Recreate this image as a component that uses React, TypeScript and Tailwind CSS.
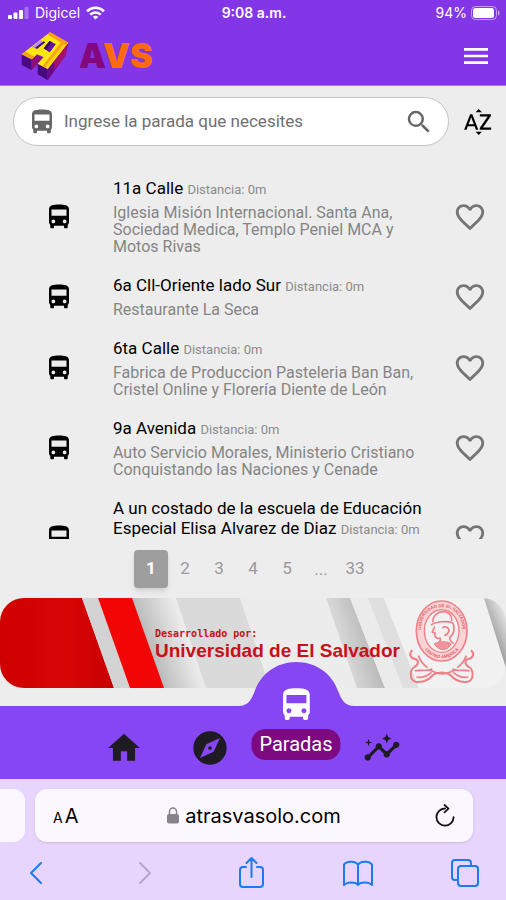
import { useState } from "react";
import type { ReactNode } from "react";
import {
  MdDirectionsBus,
  MdExplore,
  MdFavorite,
  MdFavoriteBorder,
  MdHome,
  MdInsights,
  MdMenu,
  MdSearch,
  MdSortByAlpha,
} from "react-icons/md";

interface Parada {
  id: number;
  nombre: string;
  distancia: string;
  lugares: string;
}

const paradas: Parada[] = [
  {
    id: 1,
    nombre: "11a Calle",
    distancia: "0m",
    lugares:
      "Iglesia Misión Internacional. Santa Ana, Sociedad Medica, Templo Peniel MCA y Motos Rivas",
  },
  {
    id: 2,
    nombre: "6a Cll-Oriente lado Sur",
    distancia: "0m",
    lugares: "Restaurante La Seca",
  },
  {
    id: 3,
    nombre: "6ta Calle",
    distancia: "0m",
    lugares:
      "Fabrica de Produccion Pasteleria Ban Ban, Cristel Online y Florería Diente de León",
  },
  {
    id: 4,
    nombre: "9a Avenida",
    distancia: "0m",
    lugares:
      "Auto Servicio Morales, Ministerio Cristiano Conquistando las Naciones y Cenade",
  },
  {
    id: 5,
    nombre: "A un costado de la escuela de Educación Especial Elisa Alvarez de Diaz",
    distancia: "0m",
    lugares: "",
  },
];

const paginas = ["1", "2", "3", "4", "5", "...", "33"];

function StatusBar() {
  return (
    <div className="grid grid-cols-3 items-center h-[26px] pl-2 pr-1.5 font-['Inter',sans-serif] text-sm text-white">
      <div className="flex items-center gap-1.5">
        <svg width="21" height="12" viewBox="0 0 21 12" fill="#fff">
          <rect x="0" y="8" width="4" height="4" rx="1" />
          <rect x="5.5" y="5.5" width="4" height="6.5" rx="1" />
          <rect x="11" y="3" width="4" height="9" rx="1" />
          <rect x="16.5" y="0" width="4" height="12" rx="1" opacity="0.3" />
        </svg>
        <span>Digicel</span>
        <svg width="19" height="14" viewBox="0 0 19 14" fill="none" stroke="#fff" strokeWidth="2.6">
          <path d="M1 5.2C5.8.6 13.2.6 18 5.2" />
          <path d="M4.2 8.6c3-2.9 7.6-2.9 10.6 0" />
          <path d="M9.5 13.6 6.8 10.8c1.5-1.4 3.9-1.4 5.4 0z" fill="#fff" stroke="none" />
        </svg>
      </div>
      <div className="text-center font-semibold">9:08 a.m.</div>
      <div className="flex items-center justify-end gap-1">
        <span>94%</span>
        <svg width="29" height="14" viewBox="0 0 29 14">
          <rect x="0.5" y="0.5" width="25" height="13" rx="4" fill="none" stroke="#fff" strokeOpacity="0.5" />
          <rect x="2" y="2" width="21" height="10" rx="2.5" fill="#fff" />
          <path d="M27 4.5c2 .8 2 4.2 0 5z" fill="#fff" fillOpacity="0.6" />
        </svg>
      </div>
    </div>
  );
}

function Logo() {
  return (
    <svg width="60" height="58" viewBox="0 0 180 174">
      <path d="M20 82 50 97v33L20 114z" fill="#4a0a86" />
      <path d="M50 97 66 84l18 8-16 20-18 18z" fill="#8c0f80" />
      <path d="M68 110 98 126v34l-30-18z" fill="#47087f" />
      <path d="M98 126 160 47l-8 38-54 75z" fill="#6a0a86" />
      <path d="M116 103 160 47l-8 38-32 42z" fill="#a81070" />
      <path
        fillRule="evenodd"
        d="M20 82 105 16l55 31-62 79-30-16 18-20-20-8-16 15zM86 64l18 12 18-24-18-10z"
        fill="#ffe70f"
      />
      <path d="M20 82 30 74l30 15-10 8zM97 22l8-6 55 31-7 9z" fill="#fb9d17" />
      <path d="M82 118 138 46l14 9-58 69z" fill="#fba51a" />
      <path d="M92 118 146 52l6 3-56 70z" fill="#ffd712" />
      <path d="M86 64 104 42l18 10-18 24z" fill="#64139c" />
      <path d="M86 64 104 42l6 3-16 24z" fill="#34105f" />
      <path d="M50 60 76 40l12 5-26 20z" fill="#bd92ef" />
      <path d="M60 62 86 43l5 3-25 20z" fill="#3a1070" />
    </svg>
  );
}

function Header() {
  return (
    <header className="bg-[#8236e8] border-b border-[#a876f0]">
      <StatusBar />
      <div className="flex items-center justify-between h-[59px] pl-[15px] pr-3.5">
        <div className="flex items-center gap-1">
          <Logo />
          <span className="font-['Inter',sans-serif] text-[34px] leading-8 font-black text-[#ff6a0b]">
            <span className="text-[#85097e]">A</span>VS
          </span>
        </div>
        <button aria-label="Menú" className="text-white">
          <MdMenu size={32} />
        </button>
      </div>
    </header>
  );
}

function SearchBar() {
  const [texto, setTexto] = useState("");

  return (
    <div className="flex items-center gap-[13px] pt-[11px] pl-[13px] pr-3">
      <label className="flex flex-1 min-w-0 items-center gap-[7px] h-[49px] pl-[13px] pr-3.5 rounded-full border border-[#c4c4c4] bg-white text-[#666]">
        <MdDirectionsBus size={30} className="shrink-0" />
        <input
          type="text"
          aria-label="Buscar parada"
          value={texto}
          onChange={(e) => setTexto(e.target.value)}
          placeholder="Ingrese la parada que necesites"
          className="flex-1 min-w-0 bg-transparent text-[17px] outline-none placeholder:text-[#707070]"
        />
        <MdSearch size={30} className="shrink-0" />
      </label>
      <button aria-label="Ordenar" className="text-black">
        <MdSortByAlpha size={32} />
      </button>
    </div>
  );
}

function ParadaItem({ parada }: { parada: Parada }) {
  const [favorita, setFavorita] = useState(false);

  return (
    <li className="flex items-center py-2.5 pl-11 pr-[19px]">
      <MdDirectionsBus size={30} className="shrink-0 text-black" />
      <div className="flex-1 min-w-0 ml-[39px] mr-6">
        <h2 className="text-[17px] leading-5 text-black">
          {parada.nombre}{" "}
          <small className="text-[13px] leading-none text-[#8c8c8c]">
            Distancia: {parada.distancia}
          </small>
        </h2>
        {parada.lugares ? (
          <p className="mt-1.5 text-base leading-[17px] text-[#858585]">
            {parada.lugares}
          </p>
        ) : (
          <div className="h-10" />
        )}
      </div>
      <button
        aria-label="Favorita"
        onClick={() => setFavorita(!favorita)}
        className="shrink-0 text-[#757575]"
      >
        {favorita ? <MdFavorite size={34} /> : <MdFavoriteBorder size={34} />}
      </button>
    </li>
  );
}

function Pagination() {
  const [actual, setActual] = useState("1");

  return (
    <nav className="flex justify-center pt-[11px] text-[17px] text-[#9a9a9a]">
      {paginas.map((p) =>
        p === "..." ? (
          <span key={p} className="w-[34px] leading-[38px] text-center">
            {p}
          </span>
        ) : (
          <button
            key={p}
            onClick={() => setActual(p)}
            className={`w-[34px] h-[38px] rounded-[4px] ${
              actual === p ? "bg-[#9e9e9e] font-bold text-white shadow-md" : ""
            }`}
          >
            {p}
          </button>
        )
      )}
    </nav>
  );
}

function Seal() {
  return (
    <svg width="75" height="92" viewBox="0 0 225 276" className="shrink-0" fill="none" stroke="#ee7f88">
      {/* cintas */}
      <path
        d="M22 160c-12 10-6 24 8 26 14 4 10 18-2 24-14 8-16 40 4 44 24 4 40-6 52-20 14-10 38-10 52 0 12 14 28 24 52 20 20-4 18-36 4-44-12-6-16-20-2-24 14-2 20-16 8-26"
        strokeWidth="6"
      />
      <path
        d="M30 222c16-6 30 4 52-6M194 222c-16-6-30 4-52-6M34 240c18 4 34-4 46-14M190 240c-18 4-34-4-46-14M40 176c6 16 12 26 28 36M184 176c-6 16-12 26-28 36M76 220c24 14 48 14 72 0"
        strokeWidth="5"
      />
      <ellipse cx="110" cy="102" rx="64" ry="77" stroke="#fad3d5" strokeWidth="24" />
      <ellipse cx="110" cy="102" rx="76" ry="90" strokeWidth="5" />
      <ellipse cx="110" cy="102" rx="52" ry="64" strokeWidth="4" />
      {/* busto */}
      <path
        d="M84 76c-4-16 14-34 34-32 16 2 24 14 22 28M78 84c14-10 46-14 66-6M88 88c2 8-8 14-6 18l8 2c-2 10 2 18 16 16 2 8-2 12-10 16M144 78c6 16 4 34-10 42 0 10 6 16 12 20M112 92c10-6 22 0 20 12M118 116c8-2 12-8 14-14"
        strokeWidth="5"
      />
      <path d="M88 140c16-8 38-8 50 0-6 14-16 18-24 18s-20-6-26-18z" fill="#f2949b" strokeWidth="3" />
      <path id="arco-sup" d="M52 130C36 62 72 30 110 30s74 32 58 100" stroke="none" />
      <path id="arco-inf" d="M52 146c26 50 90 50 116 0" stroke="none" />
      <g stroke="none" fill="#e0606b" fontSize="13" fontWeight="bold" fontFamily="Liberation Sans, sans-serif">
        <text textAnchor="middle">
          <textPath href="#arco-sup" startOffset="50%">UNIVERSIDAD DE EL SALVADOR</textPath>
        </text>
        <text textAnchor="middle">
          <textPath href="#arco-inf" startOffset="50%">CENTRO AMERICA</textPath>
        </text>
      </g>
    </svg>
  );
}

function Banner() {
  return (
    <div className="relative flex h-[90px] items-center justify-between mt-2.5 pl-[155px] pr-[26px] overflow-hidden rounded-3xl">
      <svg
        className="absolute inset-0 w-full h-full"
        viewBox="0 0 506 90"
        preserveAspectRatio="none"
      >
        <defs>
          <linearGradient id="rojo">
            <stop offset="0" stopColor="#cf0000" />
            <stop offset="0.6" stopColor="#d80505" />
            <stop offset="1" stopColor="#c80000" />
          </linearGradient>
          <linearGradient id="sombra" gradientUnits="userSpaceOnUse" x1="140" y1="50" x2="185" y2="34">
            <stop offset="0" stopColor="#b0b0b0" />
            <stop offset="1" stopColor="#ececec" />
          </linearGradient>
          <linearGradient id="gris" gradientUnits="userSpaceOnUse" x1="338" y1="50" x2="372" y2="40">
            <stop offset="0" stopColor="#dcdcdc" />
            <stop offset="1" stopColor="#b8b8b8" />
          </linearGradient>
          <linearGradient id="borde" gradientUnits="userSpaceOnUse" x1="488" y1="30" x2="506" y2="22">
            <stop offset="0" stopColor="#9c9c9c" />
            <stop offset="1" stopColor="#dedede" />
          </linearGradient>
        </defs>
        <rect width="506" height="90" fill="#ebebeb" />
        <path d="M130 0h46l30 90h-44z" fill="url(#sombra)" />
        <path d="M176 0h64l30 90h-64z" fill="#dadada" />
        <path d="M240 0h88l30 90H270z" fill="#ececec" />
        <path d="M326 0h24l35 90h-28z" fill="url(#gris)" />
        <path d="M350 0h18l35 90h-18z" fill="#ebebeb" />
        <path d="M368 0h16l35 90h-16z" fill="#dfdfdf" />
        <path d="M384 0h100l22 70v20h-87z" fill="#f1f1f1" />
        <path d="M484 0h22v70z" fill="url(#borde)" />
        <path d="M0 0h82l32 90H0z" fill="url(#rojo)" />
        <path d="M82 0h16l32 90h-16z" fill="#d3d3d3" />
        <path d="M98 0h34l32 90h-34z" fill="#f20505" />
      </svg>
      <div className="relative pt-1 text-[#c8101a]">
        <p className="font-['DejaVu_Sans_Mono',monospace] text-[10px] leading-3 font-bold">
          Desarrollado por:
        </p>
        <p className="font-['Liberation_Sans',sans-serif] text-[19px] leading-[22px] font-bold whitespace-nowrap">
          Universidad de El Salvador
        </p>
      </div>
      <div className="relative">
        <Seal />
      </div>
    </div>
  );
}

function TabBar() {
  return (
    <nav className="relative h-[73px] mt-[18px] bg-[#8646f4]">
      <div className="grid grid-cols-4 w-[344px] h-full mx-auto text-[#1f1b24]">
        <button aria-label="Inicio" className="flex items-center justify-center pt-2.5">
          <MdHome size={38} />
        </button>
        <button aria-label="Explorar" className="flex items-center justify-center pt-2.5">
          <MdExplore size={40} />
        </button>
        <div className="relative">
          {/* la pestaña activa sobresale de la barra */}
          <button className="absolute left-1/2 bottom-[19px] -translate-x-1/2 flex flex-col items-center text-white">
            <svg
              className="absolute left-1/2 top-[-23px] -translate-x-1/2"
              width="116"
              height="44"
              viewBox="0 0 116 44"
              fill="#8646f4"
            >
              <path d="M0 44c10 0 13-7 16-14C22 12 38 0 58 0s36 12 42 30c3 7 6 14 16 14z" />
            </svg>
            <MdDirectionsBus size={40} className="relative" />
            <span className="relative mt-1 px-2 rounded-[14px] bg-[#7d0a80] text-xl leading-[31px]">
              Paradas
            </span>
          </button>
        </div>
        <button aria-label="Estadísticas" className="flex items-center justify-center pt-2.5">
          <MdInsights size={38} />
        </button>
      </div>
    </nav>
  );
}

function ToolIcon({ label, children, className = "" }: { label: string; children: ReactNode; className?: string }) {
  return (
    <button aria-label={label} className={className}>
      <svg
        width="30"
        height="32"
        viewBox="0 0 30 32"
        fill="none"
        stroke="currentColor"
        strokeWidth="2"
        strokeLinecap="round"
        strokeLinejoin="round"
      >
        {children}
      </svg>
    </button>
  );
}

function SafariBar() {
  return (
    <footer className="h-[121px] pt-2.5 overflow-hidden bg-[#e8d5fd] font-['Inter',sans-serif]">
      <div className="flex gap-2.5 pr-[33px]">
        <div className="w-[25px] h-[53px] rounded-r-xl bg-[#fbf7fe]" />
        <div className="flex flex-1 items-center justify-between h-[53px] px-4 rounded-xl bg-[#fbf7fe] text-black shadow-sm">
          <button className="flex items-baseline gap-0.5 w-8 pl-0.5">
            <span className="text-sm">A</span>
            <span className="text-xl">A</span>
          </button>
          <div className="flex items-center gap-1.5">
            <svg width="12" height="17" viewBox="0 0 12 17">
              <rect y="7" width="12" height="9.5" rx="2" fill="#858388" />
              <path d="M2.5 8V4.5a3.5 3.5 0 0 1 7 0V8" fill="none" stroke="#858388" strokeWidth="1.5" />
            </svg>
            <span className="text-xl">atrasvasolo.com</span>
          </div>
          <button aria-label="Recargar" className="w-8">
            <svg
              className="ml-auto"
              width="24"
              height="24"
              viewBox="0 0 24 24"
              fill="none"
              stroke="#111"
              strokeWidth="1.8"
              strokeLinecap="round"
              strokeLinejoin="round"
            >
              <path d="M12 4.5a8.6 8.6 0 1 0 8.6 8.6" />
              <path d="m11.5 1 4 3.7-4 3.6" />
            </svg>
          </button>
        </div>
      </div>
      <div className="flex justify-between pt-[15px] pl-[21px] pr-[26px] text-[#1a7cf0]">
        <ToolIcon label="Atrás">
          <path d="M20 6 10 16l10 10" />
        </ToolIcon>
        <ToolIcon label="Adelante" className="text-[#b9a6cb]">
          <path d="m12 6 10 10-10 10" />
        </ToolIcon>
        <ToolIcon label="Compartir">
          <path d="M10 10H7a3 3 0 0 0-3 3v14a3 3 0 0 0 3 3h17a3 3 0 0 0 3-3V13a3 3 0 0 0-3-3h-3M15.5 20V1.500M10.500 6l5-5 5 5" />
        </ToolIcon>
        <ToolIcon label="Marcadores">
          <path d="M15 8c-2-4-11-4.500-14-.5V28c3-3.500 12-3.500 14 0 2-3.500 11-3.500 14 0V7.500C26 3.500 17 4 15 8zM15 8v20" />
        </ToolIcon>
        <ToolIcon label="Pestañas">
          <rect x="8" y="9" width="20" height="20" rx="3" />
          <path d="M8 23H5a3 3 0 0 1-3-3V6a3 3 0 0 1 3-3h13a3 3 0 0 1 3 3v3" />
        </ToolIcon>
      </div>
    </footer>
  );
}

export default function App() {
  return (
    <div className="flex flex-col h-screen bg-[#ededed] font-['Roboto',sans-serif]">
      <Header />
      <SearchBar />
      <main className="flex-1 min-h-0 mt-[22px] overflow-y-auto [scrollbar-width:none]">
        <ul>
          {paradas.map((parada) => (
            <ParadaItem key={parada.id} parada={parada} />
          ))}
        </ul>
      </main>
      <Pagination />
      <Banner />
      <TabBar />
      <SafariBar />
    </div>
  );
}
